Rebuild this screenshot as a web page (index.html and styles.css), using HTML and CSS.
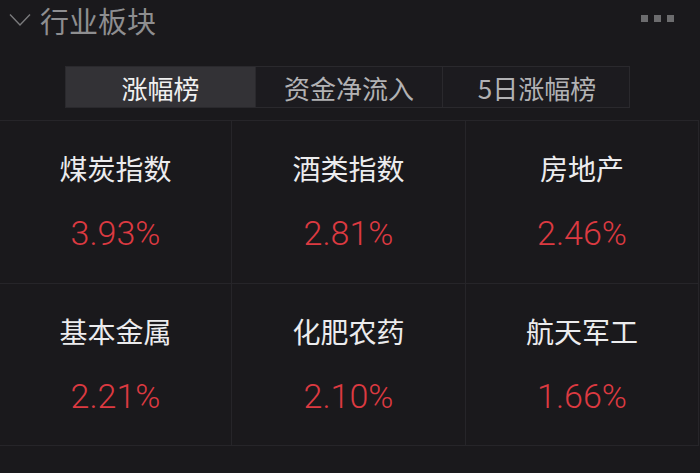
FILE: index.html
```html
<!DOCTYPE html>
<html lang="zh-CN">
<head>
<meta charset="utf-8">
<link rel="stylesheet" href="styles.css">
</head>
<body>
<div class="page">
  <div class="header">
    <svg class="chevron" width="22" height="14" viewBox="0 0 22 14"><polyline points="1,1.5 11,12 21,1.5" fill="none" stroke="#7a7a7c" stroke-width="1.4"/></svg>
    <span class="title">行业板块</span>
    <span class="more"><i></i><i></i><i></i></span>
  </div>
  <div class="tabs">
    <div class="tab active">涨幅榜</div>
    <div class="tab">资金净流入</div>
    <div class="tab">5日涨幅榜</div>
  </div>
  <div class="grid">
    <div class="cell"><div class="name">煤炭指数</div><div class="pct">3.93%</div></div>
    <div class="cell"><div class="name">酒类指数</div><div class="pct">2.81%</div></div>
    <div class="cell"><div class="name">房地产</div><div class="pct">2.46%</div></div>
    <div class="cell"><div class="name">基本金属</div><div class="pct">2.21%</div></div>
    <div class="cell"><div class="name">化肥农药</div><div class="pct">2.10%</div></div>
    <div class="cell"><div class="name">航天军工</div><div class="pct">1.66%</div></div>
  </div>
</div>
</body>
</html>
```
FILE: styles.css
```css
html, body {
  margin: 0;
  padding: 0;
  background: #1a191c;
}
.page {
  width: 700px;
  height: 473px;
  overflow: hidden;
  font-family: "Noto Sans CJK SC", "Noto Sans", sans-serif;
}
.header {
  height: 40px;
  display: flex;
  align-items: center;
  padding-left: 9px;
  padding-right: 26px;
}
.chevron {
  margin-top: 0;
  margin-right: 9px;
}
.title {
  font-size: 29px;
  line-height: 40px;
  color: #8e8e90;
  flex: 1;
}
.more {
  display: flex;
  gap: 6px;
  margin-top: -4px;
}
.more i {
  width: 7px;
  height: 7px;
  background: #6c6c6e;
}
.tabs {
  margin: 26px 0 0 65px;
  width: 565px;
  height: 42px;
  display: grid;
  grid-template-columns: 189px 187px 189px;
  border: 1px solid #2a292d;
  box-sizing: border-box;
  background: #1c1b1f;
}
.tab {
  display: flex;
  align-items: center;
  justify-content: center;
  font-size: 26px;
  color: #b2b2b4;
  border-left: 1px solid #2a292d;
}
.tab:first-child {
  border-left: none;
}
.tab.active {
  background: #333236;
  color: #f0f0f0;
}
.grid {
  margin-top: 12px;
  width: 698px;
  display: grid;
  grid-template-columns: 231px 234px 233px;
  grid-template-rows: 163px 162px;
  border-top: 1px solid #262529;
  border-right: 1px solid #262529;
}
.cell {
  border-bottom: 1px solid #262529;
  border-left: 1px solid #262529;
  box-sizing: border-box;
  display: flex;
  flex-direction: column;
  align-items: center;
  padding-top: 29px;
}
.cell:nth-child(3n+1) {
  border-left: none;
}
.name {
  font-size: 28px;
  line-height: 36px;
  color: #ececee;
}
.pct {
  margin-top: 27px;
  font-family: "Roboto", "Noto Sans", sans-serif;
  font-weight: 300;
  font-size: 34px;
  line-height: 40px;
  color: #dc3a41;
}
```
